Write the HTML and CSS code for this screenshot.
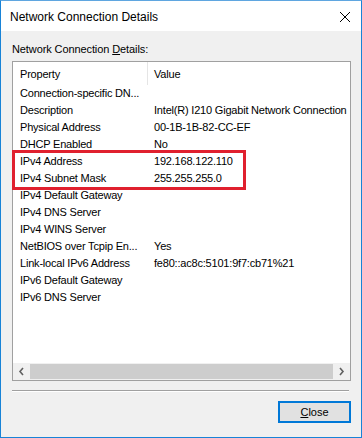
FILE: index.html
```html
<!DOCTYPE html>
<html lang="en">
<head>
  <meta charset="UTF-8">
  <title>Network Connection Details</title>
  <link rel="stylesheet" href="styles.css">
</head>
<body>

  <div class="window">
    <div class="titlebar">
      <span class="title">Network Connection Details</span>
      <svg class="close-x" width="12" height="12" viewBox="0 0 12 12">
        <path d="M1 1 L11 11 M11 1 L1 11" stroke="#000" stroke-width="1" fill="none"/>
      </svg>
    </div>

    <div class="client">
      <div class="group-label">Network Connection <u>D</u>etails:</div>

      <div class="listview">
        <div class="list-header">
          <div class="col-prop">Property</div>
          <div class="col-divider"></div>
          <div class="col-val">Value</div>
        </div>
        <div class="list-body">
          <div class="row"><span class="prop">Connection-specific DN...</span><span class="val"></span></div>
          <div class="row"><span class="prop">Description</span><span class="val">Intel(R) I210 Gigabit Network Connection</span></div>
          <div class="row"><span class="prop">Physical Address</span><span class="val">00-1B-1B-82-CC-EF</span></div>
          <div class="row"><span class="prop">DHCP Enabled</span><span class="val">No</span></div>
          <div class="row"><span class="prop">IPv4 Address</span><span class="val">192.168.122.110</span></div>
          <div class="row"><span class="prop">IPv4 Subnet Mask</span><span class="val">255.255.255.0</span></div>
          <div class="row"><span class="prop">IPv4 Default Gateway</span><span class="val"></span></div>
          <div class="row"><span class="prop">IPv4 DNS Server</span><span class="val"></span></div>
          <div class="row"><span class="prop">IPv4 WINS Server</span><span class="val"></span></div>
          <div class="row"><span class="prop">NetBIOS over Tcpip En...</span><span class="val">Yes</span></div>
          <div class="row"><span class="prop">Link-local IPv6 Address</span><span class="val">fe80::ac8c:5101:9f7:cb71%21</span></div>
          <div class="row"><span class="prop">IPv6 Default Gateway</span><span class="val"></span></div>
          <div class="row"><span class="prop">IPv6 DNS Server</span><span class="val"></span></div>
        </div>
        <div class="hscroll">
          <svg class="arrow" width="17" height="17" viewBox="0 0 17 17">
            <path d="M10 5 L7 8.5 L10 12" stroke="#606060" stroke-width="1.6" fill="none"/>
          </svg>
          <div class="thumb"></div>
          <svg class="arrow" width="17" height="17" viewBox="0 0 17 17">
            <path d="M7 5 L10 8.5 L7 12" stroke="#606060" stroke-width="1.6" fill="none"/>
          </svg>
        </div>
      </div>

      <div class="separator"></div>

      <div class="button-row">
        <button class="close-button"><u>C</u>lose</button>
      </div>
    </div>

    <!-- annotation drawn over the list -->
    <div class="highlight"></div>
  </div>

</body>
</html>
```

FILE: styles.css
```css
body {
  margin: 0;
  padding: 0;
  background-color: #f0f0f0;
  font-family: "Liberation Sans", Arial, sans-serif;
  font-size: 11px;
  color: #000;
}
.window {
  position: relative;
  width: 362px;
  height: 438px;
  box-sizing: border-box;
  border: 1px solid #1883d7;
  border-top-color: #5fa6e0;
  background-color: #f0f0f0;
  display: flex;
  flex-direction: column;
}
.titlebar {
  height: 30px;
  background-color: #fff;
  display: flex;
  align-items: center;
  justify-content: space-between;
  padding: 0 10px 0 9px;
}
.title {
  font-size: 12px;
  padding-top: 1px;
}
.close-x {
  margin-top: 1px;
}
.client {
  flex: 1;
  padding: 11px 10px 0 11px;
  display: flex;
  flex-direction: column;
}
.group-label {
  height: 15px;
  line-height: 15px;
  font-size: 11px;
  letter-spacing: -0.1px;
  margin-bottom: 4px;
}
.listview {
  height: 320px;
  box-sizing: border-box;
  border: 1px solid #a0a0a0;
  background-color: #fff;
  display: flex;
  flex-direction: column;
  letter-spacing: -0.2px;
}
.list-header {
  height: 23px;
  display: flex;
  align-items: center;
}
.col-prop {
  width: 127px;
  padding-left: 7px;
}
.col-divider {
  width: 1px;
  height: 23px;
  background-color: #e5e5e5;
}
.col-val {
  padding-left: 6px;
}
.list-body {
  flex: 1;
}
.row {
  height: 17px;
  line-height: 17px;
  display: flex;
  white-space: nowrap;
}
.prop {
  width: 134px;
  padding-left: 7px;
  flex-shrink: 0;
}
.val {
  padding-left: 0;
}
.hscroll {
  height: 17px;
  display: flex;
  align-items: center;
  background-color: #f0f0f0;
}
.thumb {
  flex: 1;
  height: 15px;
  background-color: #cdcdcd;
}
.separator {
  margin-top: 9px;
  width: 337px;
  height: 1px;
  background-color: #a0a0a0;
  border-bottom: 1px solid #fff;
}
.button-row {
  display: flex;
  justify-content: flex-end;
  margin-top: 9px;
}
.close-button {
  width: 73px;
  height: 22px;
  box-sizing: border-box;
  border: 2px solid #0078d7;
  background-color: #e1e1e1;
  font-family: "Liberation Sans", Arial, sans-serif;
  font-size: 11px;
  padding: 0;
  color: #000;
}
.highlight {
  position: absolute;
  left: 11px;
  top: 149px;
  width: 234px;
  height: 40px;
  box-sizing: border-box;
  border: 3px solid #e0202e;
}
```
